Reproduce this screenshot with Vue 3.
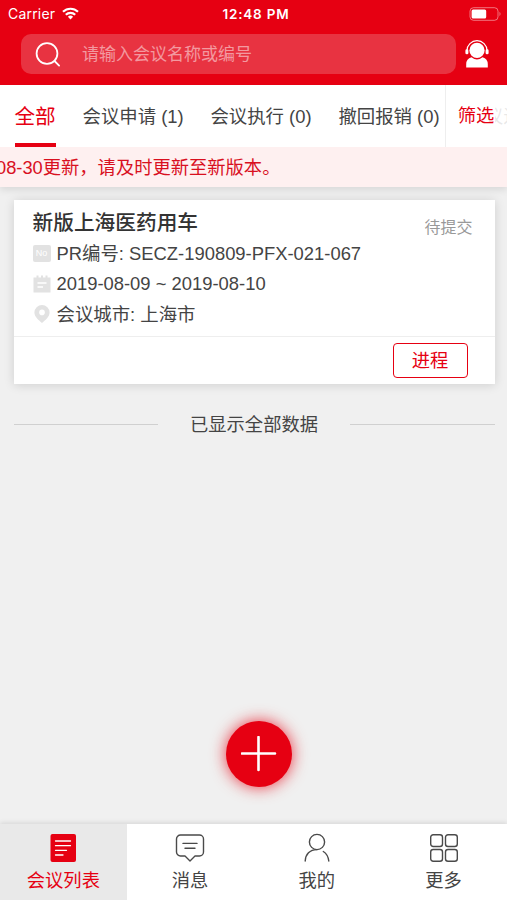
<template>
  <div class="page">
    <header class="header">
      <div class="status">
        <div class="carrier">
          <span>Carrier</span>
          <svg width="17" height="13" viewBox="0 0 17 13" fill="none" stroke="#fff" stroke-width="2.2">
            <path d="M1 4.8a10.8 10.8 0 0 1 15 0" />
            <path d="M3.8 7.8a6.8 6.8 0 0 1 9.4 0" />
            <path d="M8.5 12.4 5.9 9.8a3.8 3.8 0 0 1 5.2 0z" fill="#fff" stroke="none" />
          </svg>
        </div>
        <span class="clock">12:48 PM</span>
        <svg class="battery" width="33" height="14" viewBox="0 0 33 14">
          <rect x="1" y=".7" width="28" height="12.6" rx="3.5" fill="none" stroke="#fff" stroke-opacity=".45" />
          <rect x="2.6" y="2.4" width="14.6" height="9.2" rx="1.5" fill="#fff" />
          <path d="M30.5 4.8q2 2.2 0 4.4z" fill="#fff" fill-opacity=".5" />
        </svg>
      </div>
      <div class="search-row">
        <div class="search">
          <svg width="26" height="26" viewBox="0 0 26 26" fill="none" stroke="#fff" stroke-width="1.8" stroke-linecap="round">
            <circle cx="12" cy="12.5" r="10.4" />
            <path d="m19.5 20 4.6 4.6" />
          </svg>
          <span>请输入会议名称或编号</span>
        </div>
        <svg class="service" width="24" height="28" viewBox="0 0 24 28">
          <path d="M2 12V10.5a10 9.8 0 0 1 20 0V12" fill="none" stroke="#fff" stroke-width="1.2" />
          <rect x=".4" y="9.3" width="3" height="5" rx="1.4" fill="#fff" />
          <rect x="20.6" y="9.3" width="3" height="5" rx="1.4" fill="#fff" />
          <circle cx="12" cy="10.4" r="7.6" fill="#fff" />
          <path d="M1.2 27.5v-3.2q0-5.8 5.3-7.1 5.5 4.5 11 0 5.3 1.3 5.3 7.1v3.2z" fill="#fff" />
        </svg>
      </div>
    </header>

    <nav class="tabs">
      <span
        v-for="tab in tabs"
        :key="tab"
        class="tab"
        :class="{ active: tab === activeTab }"
        @click="activeTab = tab"
      >{{ tab }}</span>
      <button class="filter" type="button"><span>筛选</span></button>
    </nav>

    <div class="notice"><span>08-30更新，请及时更新至新版本。</span></div>

    <main class="content">
      <article class="card">
        <div class="card-body">
          <div class="title-row">
            <h2>新版上海医药用车</h2>
            <span class="state">待提交</span>
          </div>
          <div class="line">
            <span class="badge">No</span>
            <span>PR编号: SECZ-190809-PFX-021-067</span>
          </div>
          <div class="line">
            <svg width="18" height="18" viewBox="0 0 18 18">
              <path d="M.5 2.5h3V.5h2v2h2.500V.5h2v2h2.500V.5h2v2h3V17.5H.5z" fill="#e2e2e2" />
              <path d="M4.5 8h9M4.5 12h5.5" stroke="#fff" stroke-width="1.5" />
            </svg>
            <span>2019-08-09 ~ 2019-08-10</span>
          </div>
          <div class="line">
            <svg width="18" height="18" viewBox="0 0 18 18">
              <path d="M9 0a7.6 7.6 0 0 1 7.6 7.6C16.6 12 12 15.5 9 18 6 15.5 1.4 12 1.4 7.6A7.6 7.6 0 0 1 9 0z" fill="#e2e2e2" />
              <circle cx="9" cy="7.4" r="2.8" fill="#fff" />
            </svg>
            <span>会议城市: 上海市</span>
          </div>
        </div>
        <div class="card-foot">
          <button class="progress" type="button">进程</button>
        </div>
      </article>
      <div class="finished"><span>已显示全部数据</span></div>
    </main>

    <button class="add" type="button" aria-label="add">
      <svg width="36" height="36" viewBox="0 0 36 36" stroke="#fff" stroke-width="2.6" stroke-linecap="round">
        <path d="M17.5 1v33M1 17.5h33" />
      </svg>
    </button>

    <footer class="tabbar">
      <div class="item active">
        <svg width="28" height="30" viewBox="0 0 28 30">
          <rect x="1.5" y="1" width="25.5" height="28" rx="2" fill="#e60012" />
          <path d="M6.5 8h15M6.5 12.7h15M6.5 17.3h11M6.5 22h7.5" stroke="#fff" stroke-width="1.3" stroke-linecap="round" />
        </svg>
        <span>会议列表</span>
      </div>
      <div class="item">
        <svg width="30" height="30" viewBox="0 0 30 30" fill="none" stroke="#4a4a4a" stroke-width="1.4" stroke-linecap="round" stroke-linejoin="round">
          <path d="M5.5 2h19a4 4 0 0 1 4 4v13a4 4 0 0 1-4 4h-4.5l-5 5-5-5H5.5a4 4 0 0 1-4-4V6a4 4 0 0 1 4-4z" />
          <path d="M8 10.4h14M10 15.2h10" />
        </svg>
        <span>消息</span>
      </div>
      <div class="item">
        <svg width="28" height="30" viewBox="0 0 28 30" fill="none" stroke="#4a4a4a" stroke-width="1.4" stroke-linecap="round">
          <circle cx="14" cy="9" r="7.6" />
          <path d="M2.2 28c.3-6.5 4.5-11.4 11.8-11.4M20.3 18.5c3.2 2 5 5.3 5.5 9.5" />
        </svg>
        <span>我的</span>
      </div>
      <div class="item">
        <svg width="30" height="30" viewBox="0 0 30 30" fill="none" stroke="#4a4a4a" stroke-width="1.4">
          <rect x="1.7" y="1.7" width="11.8" height="11.8" rx="2.5" />
          <rect x="16.5" y="1.7" width="11.8" height="11.8" rx="2.5" />
          <rect x="1.7" y="16.5" width="11.8" height="11.8" rx="2.5" />
          <rect x="16.5" y="16.5" width="11.8" height="11.8" rx="2.5" />
        </svg>
        <span>更多</span>
      </div>
    </footer>
  </div>
</template>

<script setup>
import { ref } from 'vue';

const tabs = ['全部', '会议申请 (1)', '会议执行 (0)', '撤回报销 (0)', '会议进程 (0)'];
const activeTab = ref('全部');
</script>

<style>
body {
  margin: 0;
  background: #f0f0f0;
}
</style>

<style scoped>
.page {
  position: relative;
  display: flex;
  flex-direction: column;
  height: 900px;
  overflow: hidden;
  background: #f0f0f0;
  color: #444;
  font-family: "Liberation Sans", "Noto Sans CJK SC", sans-serif;
  font-size: 18.3px;
}

svg {
  display: block;
  flex: none;
}

button {
  font: inherit;
  padding: 0;
  cursor: pointer;
}

.header {
  flex: none;
  height: 84.5px;
  background: #e60012;
  color: #fff;
}

.status {
  display: grid;
  grid-template-columns: 1fr auto 1fr;
  align-items: center;
  height: 27px;
  padding: 0 5px 0 8px;
  font-family: Inter, sans-serif;
  font-size: 14px;
}

.carrier {
  display: flex;
  align-items: center;
  gap: 7px;
  letter-spacing: 0.2px;
}

.clock {
  padding-left: 2px;
  font-size: 13.5px;
  font-weight: 600;
  letter-spacing: 0.8px;
}

.battery {
  justify-self: end;
}

.search-row {
  display: flex;
  align-items: center;
  gap: 9px;
  margin-top: 7px;
  padding-left: 21px;
}

.search {
  display: flex;
  align-items: center;
  box-sizing: border-box;
  width: 435px;
  height: 40px;
  padding-left: 14px;
  gap: 21px;
  border-radius: 10px;
  background: rgba(240, 240, 240, 0.21);
  font-size: 17px;
}

.search span {
  color: rgba(255, 255, 255, 0.5);
  line-height: 43px;
}

.tabs {
  position: relative;
  display: flex;
  flex: none;
  gap: 26.8px;
  height: 62.5px;
  padding-left: 14.5px;
  overflow: hidden;
  background: #fff;
}

.tab {
  flex: none;
  box-sizing: border-box;
  height: 62.5px;
  font-size: 18.4px;
  line-height: 63px;
  white-space: nowrap;
}

.tab.active {
  color: #e60012;
  font-size: 20.6px;
  border-bottom: 4px solid #e60012;
}

.filter {
  position: absolute;
  top: 0;
  right: 0;
  width: 62px;
  height: 100%;
  padding-right: 1px;
  border: 0;
  border-left: 1px solid #eee;
  background: rgba(255, 255, 255, 0.88);
  color: #e60012;
  line-height: 62px;
}

.filter span {
  display: block;
  margin: 0 11px;
  background: #fff;
}

.notice {
  flex: none;
  height: 40px;
  line-height: 42px;
  overflow: hidden;
  background: #fef0f0;
  box-shadow: 0 2px 8px rgba(0, 0, 0, 0.12);
  color: #d9101f;
  white-space: nowrap;
}

.notice span {
  margin-left: -4px;
}

.content {
  flex: 1;
  padding: 13px 12.5px 0 13.5px;
}

.card {
  background: #fff;
  box-shadow: 0 1px 10px rgba(0, 0, 0, 0.14);
}

.card-body {
  box-sizing: border-box;
  height: 136px;
  padding: 8px 22px 0 19px;
}

.title-row {
  display: flex;
  justify-content: space-between;
  height: 30px;
}

h2 {
  margin: 0;
  color: #333;
  font-size: 20.7px;
  font-weight: 500;
  line-height: 29px;
}

.state {
  padding-top: 6px;
  color: #999;
  font-size: 16px;
  line-height: 28px;
}

.line {
  display: flex;
  align-items: center;
  gap: 6px;
  height: 30.5px;
  font-size: 18.4px;
  line-height: 31px;
  white-space: nowrap;
}

.badge {
  width: 18px;
  height: 17px;
  border-radius: 2px;
  background: #e2e2e2;
  color: #fff;
  font-size: 9px;
  line-height: 17px;
  text-align: center;
}

.card-foot {
  display: flex;
  align-items: center;
  justify-content: flex-end;
  box-sizing: border-box;
  height: 48px;
  padding-right: 27px;
  border-top: 1px solid #eee;
}

.progress {
  width: 75px;
  height: 35px;
  border: 1.5px solid #e60012;
  border-radius: 4px;
  background: #fff;
  color: #e60012;
  line-height: 32px;
}

.finished {
  display: flex;
  align-items: center;
  gap: 32px;
  margin-top: 26px;
  line-height: 28px;
}

.finished span {
  padding-top: 1px;
  margin-bottom: -1px;
}

.finished::before,
.finished::after {
  content: "";
  flex: 1;
  height: 1px;
  background: #d0d0d0;
}

.add {
  position: absolute;
  left: 226px;
  bottom: 113px;
  display: flex;
  align-items: center;
  justify-content: center;
  width: 66px;
  height: 66px;
  border: 0;
  border-radius: 50%;
  background: #e60012;
  box-shadow: 0 0 16px rgba(230, 0, 18, 0.8);
}

.tabbar {
  display: flex;
  flex: none;
  height: 76px;
  background: #fff;
  box-shadow: 0 -1px 5px rgba(0, 0, 0, 0.12);
}

.item {
  display: flex;
  flex: 1;
  flex-direction: column;
  align-items: center;
  padding-top: 9px;
}

.item span {
  margin-top: 4px;
  line-height: 27px;
}

.item.active {
  background: #e9e9e9;
  color: #e60012;
}
</style>
